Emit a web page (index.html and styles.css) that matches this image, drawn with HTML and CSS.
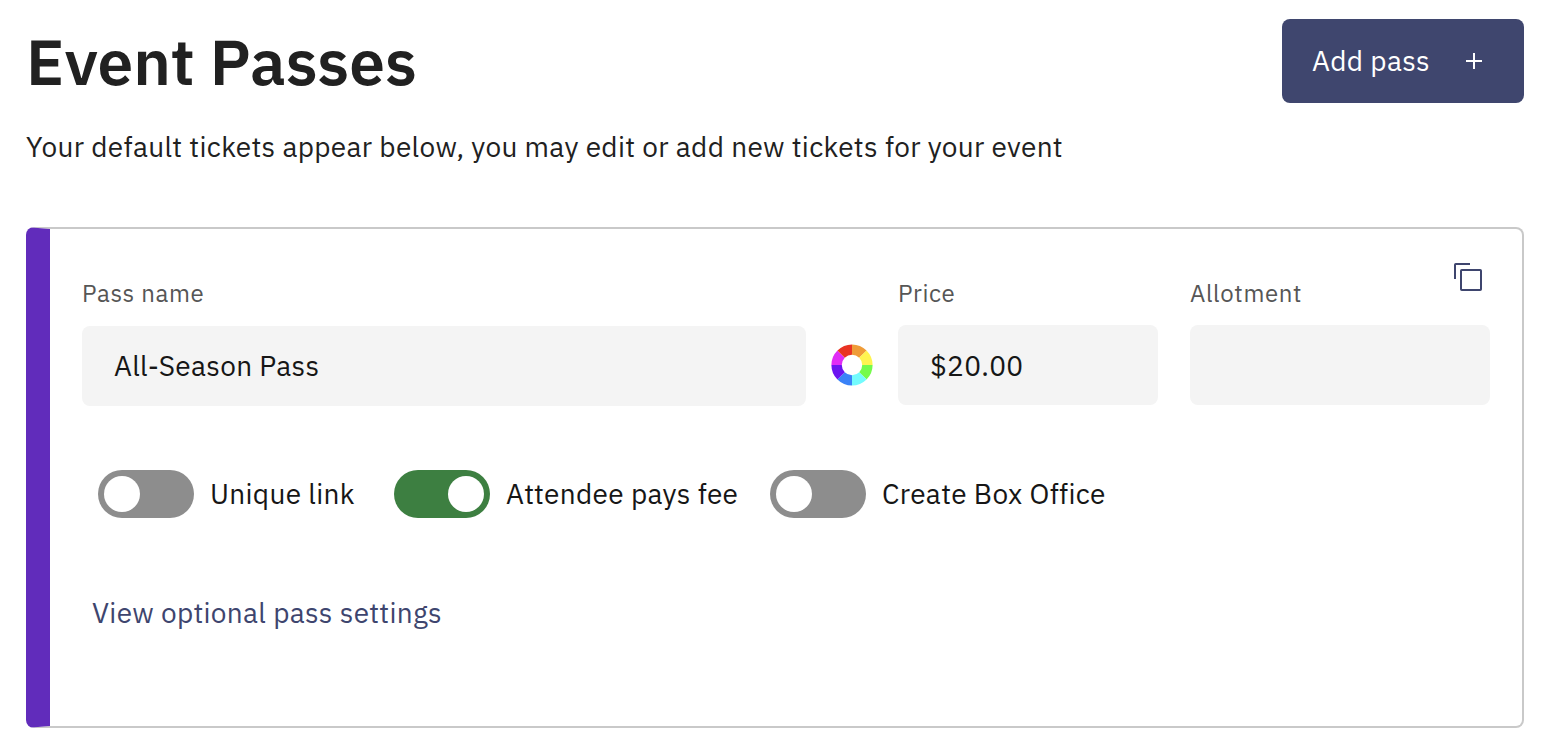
FILE: index.html
```html
<!DOCTYPE html>
<html lang="en">
<head>
<meta charset="utf-8">
<title>Event Passes</title>
<link rel="stylesheet" href="styles.css">
</head>
<body>
<main class="page">
  <header class="page-header">
    <h1 class="title">Event Passes</h1>
    <button class="add-button" type="button">
      <span class="add-label">Add pass</span>
      <svg class="add-icon" width="16" height="16" viewBox="0 0 16 16"><path d="M7 0h2v7h7v2H9v7H7V9H0V7h7z" fill="#fff"/></svg>
    </button>
  </header>
  <p class="subtitle">Your default tickets appear below, you may edit or add new tickets for your event</p>

  <section class="card">
    <button class="copy-button" type="button" aria-label="Duplicate pass">
      <svg width="28" height="28" viewBox="0 0 28 28" fill="none" stroke="#3e456e" stroke-width="2"><rect x="7" y="7" width="20" height="20" rx=".8"/><path d="M1 16V1.8q0-.8.8-.8H16"/></svg>
    </button>
    <div class="fields">
      <label class="field field-name">
        <span class="field-label">Pass name</span>
        <span class="input">All-Season Pass</span>
      </label>
      <svg class="color-wheel" width="42" height="42" viewBox="-21 -21 42 42">
        <g fill="none" stroke-width="10.4">
          <path d="M0-15.4A15.4 15.4 0 0 1 10.89-10.89" stroke="#ef9c38"/>
          <path d="M10.89-10.89A15.4 15.4 0 0 1 15.4 0" stroke="#fff450"/>
          <path d="M15.4 0A15.4 15.4 0 0 1 10.89 10.89" stroke="#75fb4c"/>
          <path d="M10.89 10.89A15.4 15.4 0 0 1 0 15.4" stroke="#73fbfd"/>
          <path d="M0 15.4A15.4 15.4 0 0 1-10.89 10.89" stroke="#3a82f7"/>
          <path d="M-10.89 10.89A15.4 15.4 0 0 1-15.4 0" stroke="#6b14f0"/>
          <path d="M-15.4 0A15.4 15.4 0 0 1-10.89-10.89" stroke="#e02cf5"/>
          <path d="M-10.89-10.89A15.4 15.4 0 0 1 0-15.4" stroke="#e93323"/>
        </g>
      </svg>
      <label class="field field-price">
        <span class="field-label">Price</span>
        <span class="input">$20.00</span>
      </label>
      <label class="field field-allotment">
        <span class="field-label">Allotment</span>
        <span class="input"></span>
      </label>
    </div>
    <div class="toggles">
      <span class="switch"></span><span class="switch-label t-link">Unique link</span>
      <span class="switch switch-on"></span><span class="switch-label t-fee">Attendee pays fee</span>
      <span class="switch"></span><span class="switch-label">Create Box Office</span>
    </div>
    <a class="settings-link">View optional pass settings</a>
  </section>
</main>
</body>
</html>
```
FILE: styles.css
```css
* { box-sizing: border-box; }
body { margin: 0; background: #fff; color: #212121; font-family: "IBM Plex Sans", Roboto, "Liberation Sans", sans-serif; font-size: 28px; letter-spacing: .32px; -webkit-font-smoothing: antialiased; }
button { font: inherit; letter-spacing: inherit; border: 0; cursor: pointer; }
.page { padding: 19px 28px 0 26px; }
.page-header { display: flex; justify-content: space-between; align-items: flex-start; height: 84px; }
.title { margin: 0; font-size: 64px; line-height: 84px; font-weight: 600; letter-spacing: 0; white-space: nowrap; }
.add-button { display: flex; align-items: center; justify-content: space-between; width: 242px; height: 84px; padding: 0 42px 0 30px; border-radius: 8px; background: #3f466e; color: #fff; }
.add-label { padding-bottom: 2px; white-space: nowrap; }
.subtitle { margin: 24px 0 0; line-height: 40px; white-space: nowrap; }
.card { position: relative; height: 501px; margin-top: 60px; padding: 48px 32px 0; border: 2px solid #c9c9c9; border-left: 24px solid #612cbb; border-radius: 8px; }
.copy-button { position: absolute; top: 34px; right: 40px; width: 28px; height: 28px; padding: 0; background: none; }
.copy-button svg { display: block; }
.fields { display: flex; align-items: flex-start; }
.field { display: flex; flex-direction: column; }
.field-name { width: 724px; }
.field-price { width: 260px; margin-right: 32px; }
.field-allotment { width: 300px; }
.field-label { height: 48px; line-height: 32px; font-size: 24px; color: #565656; letter-spacing: .64px; white-space: nowrap; }
.field-name .field-label { height: 49px; }
.input { height: 80px; padding-left: 32px; border-radius: 8px; background: #f4f4f4; color: #161616; line-height: 82px; white-space: nowrap; }
.field-name .input { line-height: 80px; }
.color-wheel { margin: 67px 25px 0; }
.toggles { display: flex; align-items: center; height: 48px; margin: 64px 0 0 16px; color: #161616; }
.switch { flex: none; width: 96px; height: 48px; padding: 6px; border-radius: 24px; background: #8d8d8d; }
.switch::after { content: ""; display: block; width: 36px; height: 36px; border-radius: 50%; background: #fff; }
.switch-on { background: #3d7f41; }
.switch-on::after { margin-left: 48px; }
.switch-label { flex: none; padding: 0 0 2px 16px; white-space: nowrap; }
.t-link { width: 200px; }
.t-fee { width: 280px; }
.settings-link { display: inline-block; margin: 75px 0 0 10px; line-height: 40px; color: #3e456e; white-space: nowrap; }
```
